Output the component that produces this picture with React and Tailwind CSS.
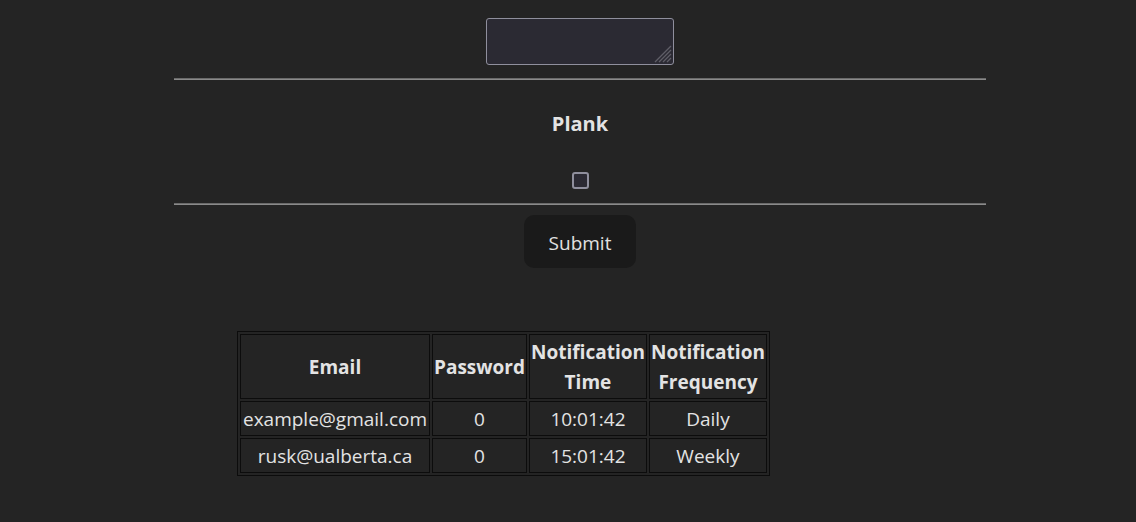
import React from "react";

const rows = [
  { email: "example@gmail.com", password: "0", time: "10:01:42", freq: "Daily" },
  { email: "rusk@ualberta.ca", password: "0", time: "15:01:42", freq: "Weekly" },
];

const cell = "border border-[#0c0c0c] px-px pt-[2px] pb-px";

export default function App() {
  return (
    <div
      className="min-h-screen w-full bg-[#242424] text-[19px] leading-[30px] text-[#e3e3e3]"
      style={{ fontFamily: '"Open Sans", "Noto Sans", sans-serif' }}
    >
      <div className="ml-[174px] flex w-[812px] flex-col items-center pt-[18px]">
        <div className="relative h-[47px] w-[188px]">
          <textarea className="block h-full w-full resize-none rounded-[3px] border border-[#8f8f9d] bg-[#2b2a33] text-[#e3e3e3]" />
          {/* resize grip */}
          <svg className="pointer-events-none absolute bottom-[2px] right-[2px]" width="18" height="18" viewBox="0 0 18 18">
            <path
              d="M17 1 L1 17 M17 5 L5 17 M17 9 L9 17 M17 13 L13 17"
              stroke="#5f5e67"
              strokeWidth="1.3"
            />
          </svg>
        </div>

        <div className="mt-[13px] h-[2px] w-full border-t border-b border-t-[#6a6a6a] border-b-[#8a8a8a]" />

        <p className="mt-[29px] text-[20px] font-bold">Plank</p>

        <input
          type="checkbox"
          className="mt-[33px] block h-[17px] w-[17px] appearance-none rounded-[3px] border-2 border-[#8f8f9d] bg-[#2b2a33]"
        />

        <div className="mt-[14px] h-[2px] w-full border-t border-b border-t-[#6a6a6a] border-b-[#8a8a8a]" />

        <button className="mt-[10px] h-[53px] w-[112px] rounded-[10px] bg-[#1a1a1a] pt-[2px] text-[#e1e1e1]">
          Submit
        </button>
      </div>

      <div className="ml-[237px] mt-[63px]">
        <table className="border-separate border-spacing-x-[2.5px] border-spacing-y-[2px] border border-[#0c0c0c] text-center">
          <thead>
            <tr>
              <th className={`w-[190px] ${cell}`}>Email</th>
              <th className={`w-[93px] ${cell}`}>Password</th>
              <th className={`w-[117px] ${cell}`}>
                Notification
                <br />
                Time
              </th>
              <th className={`w-[118px] ${cell}`}>
                Notification
                <br />
                Frequency
              </th>
            </tr>
          </thead>
          <tbody>
            {rows.map((r) => (
              <tr key={r.email}>
                <td className={cell}>{r.email}</td>
                <td className={cell}>{r.password}</td>
                <td className={cell}>{r.time}</td>
                <td className={cell}>{r.freq}</td>
              </tr>
            ))}
          </tbody>
        </table>
      </div>
    </div>
  );
}
